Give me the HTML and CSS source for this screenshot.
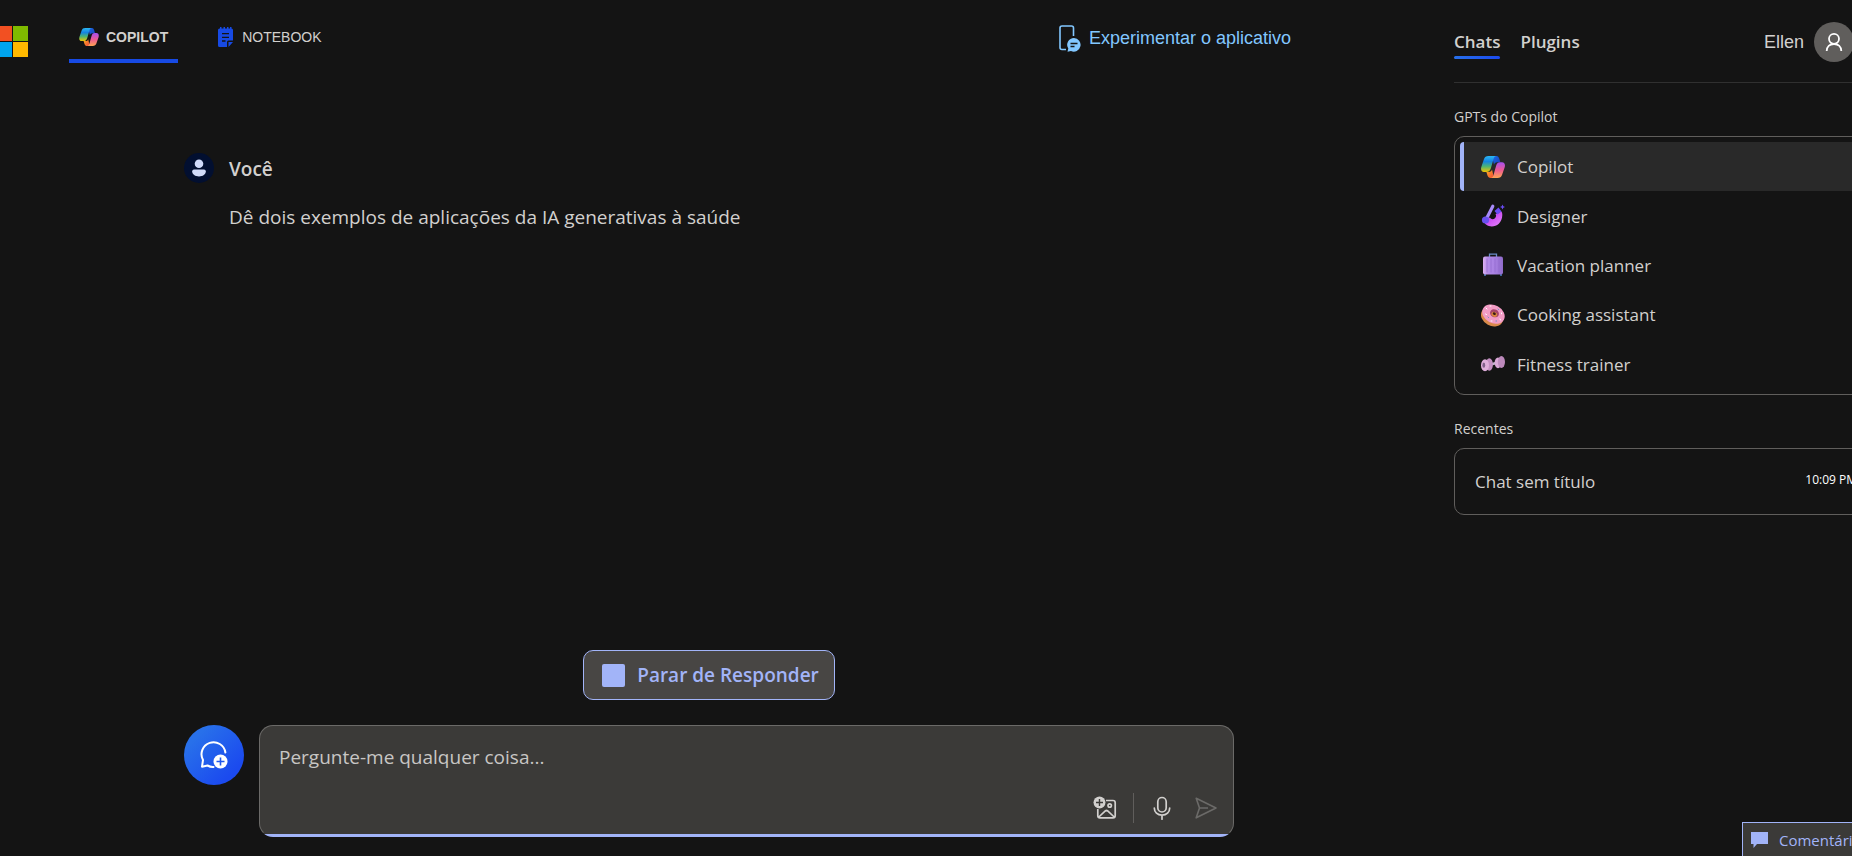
FILE: index.html
```html
<!DOCTYPE html>
<html lang="pt-BR">
<head>
<meta charset="utf-8">
<title>Copilot</title>
<link rel="stylesheet" href="styles.css">
</head>
<body>
<svg class="defs" aria-hidden="true">
  <defs>
    <linearGradient id="cpA" x1="0" y1="0" x2="0" y2="1"><stop offset="0" stop-color="#2bb8f5"/><stop offset=".35" stop-color="#1583e0"/><stop offset=".65" stop-color="#4cb473"/><stop offset="1" stop-color="#f2c400"/></linearGradient>
    <linearGradient id="cpB" x1="0" y1="0" x2="0" y2="1"><stop offset="0" stop-color="#a64ff0"/><stop offset=".5" stop-color="#ee5a93"/><stop offset="1" stop-color="#ffa552"/></linearGradient>
    <linearGradient id="cpC" x1="0" y1="0" x2="1" y2="1"><stop offset="0" stop-color="#1c6be8"/><stop offset="1" stop-color="#1740b8"/></linearGradient>
    <linearGradient id="cpD" x1="0" y1="0" x2="1" y2="1"><stop offset="0" stop-color="#ffb01f"/><stop offset="1" stop-color="#f0453a"/></linearGradient>
    <symbol id="copilot" viewBox="0 0 24 22">
      <path fill="url(#cpC)" d="M11 0h4.500c1.500 0 2.200 1 2.700 2.500l1.200 3.800h-3.400c-1.600 0-2.600 1-3 2.400z"/>
      <path fill="url(#cpD)" d="M13 22H9.500c-1.500 0-2.500-1-3-2.500L5.400 16H8c1.600 0 2.600-1 3-2.400z"/>
      <path fill="url(#cpA)" d="M7.500 0H15c-1.500.3-2 1.500-2.500 3L9.800 12.500C9 15 7.500 16 5.500 16H3C.3 16-.4 13.600.3 11L3 3C3.700 1 5 0 7.500 0z"/>
      <path fill="url(#cpB)" d="M16.500 22H10c1.500-.3 2-1.500 2.500-3l2.700-9.500C16 7 17 6.200 19 6.200h2c2.700 0 3.400 2.400 2.700 5L21 19c-.7 2-2 3-4.500 3z"/>
    </symbol>
  </defs>
</svg>
<div class="app">
  <div class="main">
    <header class="topbar">
      <svg class="ms" viewBox="0 0 28 31" role="img" aria-label="Microsoft"><path fill="#f25022" d="M0 0h12v15H0z"/><path fill="#7fba00" d="M13 0h15v15H13z"/><path fill="#00a4ef" d="M0 16h12v15H0z"/><path fill="#ffb900" d="M13 16h15v15H13z"/></svg>
      <nav class="tabs">
        <a class="tab tab-on" href="#copilot"><svg class="tab-cp"><use href="#copilot"/></svg>COPILOT</a>
        <a class="tab" href="#notebook"><svg class="tab-nb" viewBox="0 0 15 20"><path fill="#174ae4" d="M1.500 1.500H2V0h1.500v1.500h2V0H7v1.500h2V0h1.500v1.500h1.500V0h1.500v1.500Q15 1.500 15 3v10.500h-4.500Q9 13.500 9 15v5H1.500Q0 20 0 18.500V3q0-1.500 1.500-1.500zM10.500 15H15l-4.500 5z"/><path stroke="#141414" stroke-width="1.300" d="M4 6.700h7M4 10.300h7M4 14h3.500"/></svg>NOTEBOOK</a>
      </nav>
      <a class="try" href="#app"><svg class="phone" viewBox="0 0 22 27"><path fill="none" stroke="#82c7ff" stroke-width="1.600" d="M14.500 11V3q0-2-2-2H3Q1 1 1 3v19.500q0 2 2 2h4"/><path fill="#82c7ff" d="M15 13a6.800 6.800 0 1 1-3 13l-3.500.8.800-3.300A6.800 6.800 0 0 1 15 13z"/><path stroke="#141414" stroke-width="1.300" d="M11.500 18.500h7M11.500 21.500h4"/></svg>Experimentar o aplicativo</a>
    </header>
    <main class="chat">
      <section class="message">
        <svg class="you" viewBox="0 0 30 30"><circle cx="15" cy="15" r="15" fill="#020f30"/><circle cx="15" cy="10.800" r="4.300" fill="#d1dbfa"/><path fill="#d1dbfa" d="M10 16.500h10q1.800 0 1.800 1.800c0 3.200-3 5.200-6.800 5.200s-6.800-2-6.800-5.200q0-1.800 1.800-1.800z"/></svg>
        <div>
          <h2 class="author">Você</h2>
          <p class="text">Dê dois exemplos de aplicações da IA generativas à saúde</p>
        </div>
      </section>
      <button class="stop" type="button"><span class="square"></span>Parar de Responder</button>
      <form class="composer">
        <button class="new" type="button" aria-label="Novo tópico"><svg viewBox="0 0 28 28"><path fill="none" stroke="#fff" stroke-width="2" stroke-linejoin="round" stroke-linecap="round" d="M25.400 11.500A12 12 0 1 0 3 19l-1 6.700 5.500-1.200q3 1.600 6 1.400"/><circle cx="20.500" cy="20.500" r="7" fill="#fff"/><path stroke="#2058ec" stroke-width="1.600" d="M20.500 16.500v8M16.500 20.500h8"/></svg></button>
        <div class="box">
          <textarea class="ask" rows="1" aria-label="Pergunte-me qualquer coisa" placeholder="Pergunte-me qualquer coisa..."></textarea>
          <div class="tools">
            <button class="tool" type="button" aria-label="Adicionar imagem"><svg viewBox="0 0 24 24"><g fill="none" stroke="#d2d0ce" stroke-width="1.700"><path d="M13 4.500h7q2.200 0 2.200 2.200v13q0 2.200-2.200 2.200H7q-2.200 0-2.200-2.200V13M5.800 21l6.500-6q1.200-1 2.400 0l6.500 6"/><circle cx="16.700" cy="9.500" r="1.700"/></g><circle cx="6.500" cy="6.500" r="6" fill="#d2d0ce"/><path stroke="#3b3a38" stroke-width="1.400" d="M6.500 3v7M3 6.500h7"/></svg></button>
            <span class="sep"></span>
            <button class="tool tool-mic" type="button" aria-label="Usar microfone"><svg viewBox="0 0 24 24"><g fill="none" stroke="#d2d0ce" stroke-width="1.700" stroke-linecap="round"><rect x="7.800" y="1.500" width="8.400" height="14.500" rx="4.200"/><path d="M4.300 12c0 4.200 3.200 7.200 7.700 7.200s7.700-3 7.700-7.200M12 19.500v3.700"/></g></svg></button>
            <button class="tool" type="submit" aria-label="Enviar"><svg viewBox="0 0 24 24"><path fill="none" stroke="#6b6a68" stroke-width="1.600" stroke-linejoin="round" d="M2.200 2.200L22 12 2.200 21.800 5.500 12zM5.500 12H14"/></svg></button>
          </div>
        </div>
      </form>
    </main>
  </div>
  <aside class="side">
    <div class="side-top">
      <nav class="side-tabs"><a class="side-tab side-on" href="#chats">Chats</a><a class="side-tab" href="#plugins">Plugins</a></nav>
      <button class="user" type="button">Ellen<svg viewBox="0 0 40 40"><circle cx="20" cy="20" r="20" fill="#605e5c"/><g fill="none" stroke="#fff" stroke-width="1.800"><circle cx="20" cy="16.800" r="5"/><path d="M12.700 29c0-4.400 3-7 7.300-7s7.300 2.600 7.300 7"/></g></svg></button>
    </div>
    <h3 class="label">GPTs do Copilot</h3>
    <ul class="card gpts">
      <li><a class="gpt gpt-on" href="#g1"><svg viewBox="0 0 24 24"><use href="#copilot" y="1" width="24" height="22"/></svg>Copilot</a></li>
      <li><a class="gpt" href="#g2"><svg viewBox="0 0 24 24"><defs><linearGradient id="dsA" x1="0" y1="0" x2="1" y2="1"><stop offset="0" stop-color="#8a4bf2"/><stop offset=".5" stop-color="#cf52f5"/><stop offset="1" stop-color="#e68bf9"/></linearGradient></defs><path fill="url(#dsA)" d="M2.500 16c1.500 9.500 18.500 9 18.800-5 0-1.500-.3-2.500-.8-3.500l-6 2.500c2.500 3.500-3.500 7.500-5.500 3.500z"/><path stroke="#a98cfa" stroke-width="3.200" stroke-linecap="round" d="M11.800 2.200L5.800 14"/><circle cx="4.500" cy="16" r="3.600" fill="#6a50ef"/><path fill="#6a4cf5" d="M17.500 3.500l3 4-4 3-3-3.500zM21.500.5l.8 1.700 1.700.8-1.700.8-.8 1.700-.8-1.700-1.700-.8 1.700-.8z"/></svg>Designer</a></li>
      <li><a class="gpt" href="#g3"><svg viewBox="0 0 24 24"><defs><linearGradient id="vcA"><stop offset="0" stop-color="#dcb0f2"/><stop offset=".25" stop-color="#b28be8"/><stop offset=".6" stop-color="#a880e2"/><stop offset="1" stop-color="#8f6bc9"/></linearGradient></defs><path fill="none" stroke="#6b8cc8" stroke-width="1.300" d="M8.500 4V1.200h7V4"/><path stroke="#3c6499" stroke-width="2" d="M4 20v3M20 20v3"/><rect x="2" y="3.500" width="20" height="18" rx="2" fill="url(#vcA)"/><path stroke="#8f68cc" stroke-width=".7" d="M6 5.500v14M10 5.500v14M14 5.500v14M18 5.500v14"/></svg>Vacation planner</a></li>
      <li><a class="gpt" href="#g4"><svg viewBox="0 0 24 24"><g transform="rotate(28 12 12)"><ellipse cx="12" cy="14" rx="11.600" ry="9" fill="#d98a4b"/><ellipse cx="12" cy="11" rx="11.800" ry="9" fill="#f29cc5"/><ellipse cx="12.500" cy="9.800" rx="4.600" ry="3.900" fill="#a8446a"/><ellipse cx="12.800" cy="10.800" rx="3" ry="2.400" fill="#d9843c"/><ellipse cx="12.500" cy="10.200" rx="1.600" ry="1.200" fill="#3a1a14"/></g><path stroke="#fff" stroke-width="1" stroke-linecap="round" d="M5 5l1 1M9 3h1M4.500 11l1 .5M10 18h1M19 16l.5 1M20.500 10v.8"/><path stroke="#5b8fc7" stroke-linecap="round" d="M7 14l.5.500M15 18h.5M17 6l.5.500"/></svg>Cooking assistant</a></li>
      <li><a class="gpt" href="#g5"><svg viewBox="0 0 24 24"><path stroke="#c3b6cb" stroke-width="2.500" d="M8 13l9-2.500"/><ellipse cx="8.300" cy="12.500" rx="3.600" ry="6.200" fill="#c48fc2"/><ellipse cx="4" cy="13.200" rx="4" ry="6" fill="#dfaedb"/><ellipse cx="2.800" cy="13.200" rx="1.400" ry="2.600" fill="#80608a"/><ellipse cx="17" cy="10.800" rx="3.400" ry="5.400" fill="#dba9d8"/><ellipse cx="20.400" cy="10" rx="3.600" ry="6" fill="#bd8abc"/></svg>Fitness trainer</a></li>
    </ul>
    <h3 class="label label-recent">Recentes</h3>
    <a class="card recent" href="#chat">Chat sem título<time class="time">10:09 PM</time></a>
  </aside>
</div>
<button class="feedback" type="button"><svg viewBox="0 0 17 16"><path fill="#a2b4f8" d="M0 0h17v12H6l-3.500 4v-4H0z"/></svg>Comentários</button>
</body>
</html>
```
FILE: styles.css
```css
* { box-sizing: border-box; }

body {
  margin: 0;
  overflow: hidden;
  background: #141414;
  color: #d2d0ce;
  font-family: "Open Sans", "Segoe UI", sans-serif;
}

h2, h3, p, ul { margin: 0; padding: 0; list-style: none; }
a { color: inherit; text-decoration: none; }
button { border: 0; padding: 0; background: none; color: inherit; font: inherit; cursor: pointer; }
svg { display: block; flex: none; }
.defs { position: absolute; width: 0; height: 0; }

.app { display: flex; min-height: 100vh; }
.main { flex: 1; display: flex; flex-direction: column; }

.topbar {
  display: flex;
  align-items: flex-start;
  font-family: "Liberation Sans", Arial, sans-serif;
}
.ms { width: 28px; height: 31px; margin-top: 26px; }
.tabs { display: flex; gap: 30px; margin-left: 41px; }
.tab {
  display: flex;
  align-items: center;
  height: 63px;
  padding: 15px 10px 1px;
  border-bottom: 4px solid transparent;
  font-size: 14px;
}
.tab-on { border-color: #174ae4; font-weight: 700; }
.tab-cp { width: 20px; height: 18px; margin-right: 7px; }
.tab-nb { width: 15px; height: 20px; margin-right: 9px; }
.try {
  display: flex;
  align-items: center;
  gap: 8px;
  margin: 25px 143px 0 auto;
  color: #82c7ff;
  font-size: 18px;
}
.phone { width: 22px; height: 27px; }

.chat {
  flex: 1;
  display: flex;
  flex-direction: column;
  padding: 90px 200px 19px 184px;
}
.message { display: flex; gap: 15px; margin-bottom: auto; }
.you { width: 30px; height: 30px; }
.author { font-size: 19px; line-height: 32px; font-weight: 600; }
.text { margin-top: 16px; font-size: 19px; line-height: 32px; }

.stop {
  display: flex;
  align-items: center;
  align-self: center;
  gap: 12px;
  height: 50px;
  margin-bottom: 25px;
  padding: 0 15px 0 18px;
  border: 1px solid #a2b4f8;
  border-radius: 10px;
  background: #484644;
  color: #a2b4f8;
  font-size: 19px;
  font-weight: 600;
}
.square { width: 23px; height: 23px; border-radius: 2px; background: #a2b4f8; }

.composer { display: flex; gap: 15px; }
.new {
  display: grid;
  place-items: center;
  width: 60px;
  height: 60px;
  border-radius: 50%;
  background: linear-gradient(135deg, #2870ea 20%, #1b4aef 80%);
}
.new svg { width: 28px; height: 28px; }
.box {
  flex: 1;
  display: flex;
  flex-direction: column;
  justify-content: space-between;
  min-height: 112px;
  padding: 15px 10px 11px 19px;
  border: 1px solid #6b6a68;
  border-bottom-color: transparent;
  border-radius: 14px;
  background: linear-gradient(#a2b4f8, #a2b4f8) bottom / 100% 3px no-repeat border-box, #3b3a38;
}
.ask {
  width: 100%;
  height: 32px;
  border: 0;
  padding: 0;
  outline: 0;
  resize: none;
  background: none;
  color: #d2d0ce;
  font: 19px/32px "Open Sans", "Segoe UI", sans-serif;
}
.ask::placeholder { color: #c8c6c4; opacity: 1; }
.tools { display: flex; align-items: center; justify-content: flex-end; }
.tool { display: grid; place-items: center; width: 34px; height: 34px; }
.tool svg { width: 24px; height: 24px; }
.sep { width: 1px; height: 30px; margin: 0 11px; background: #605e5c; }
.tool-mic { margin-right: 10px; }

.side { flex: none; width: 438px; margin-right: -20px; padding: 22px 0 0 20px; }
.side-top {
  display: flex;
  justify-content: space-between;
  height: 61px;
  padding-right: 18px;
  border-bottom: 1px solid #303030;
}
.side-tabs { display: flex; gap: 20px; align-items: flex-start; padding-top: 6px; }
.side-tab { font-size: 17px; line-height: 28px; font-weight: 600; }
.side-on::after {
  content: "";
  display: block;
  height: 3px;
  border-radius: 2px;
  background: linear-gradient(90deg, #2870ea, #1b4aef);
}
.user {
  display: flex;
  align-items: center;
  gap: 10px;
  height: 40px;
  font: 18px "Liberation Sans", Arial, sans-serif;
}
.user svg { width: 40px; height: 40px; }

.label { margin-top: 22px; font-size: 14px; line-height: 24px; font-weight: 400; }
.card { margin-top: 7px; border: 1px solid #605e5c; border-radius: 10px; }
.gpts {
  display: grid;
  grid-auto-rows: 1fr;
  min-height: 259px;
  padding: 5px;
}
.gpt {
  display: flex;
  align-items: center;
  gap: 12px;
  height: 100%;
  padding-left: 17px;
  border-left: 4px solid transparent;
  border-radius: 4px;
  font-size: 17px;
}
.gpt svg { width: 24px; height: 24px; }
.gpt-on { border-color: #a2b4f8; background: #292929; }
.recent {
  display: flex;
  align-items: center;
  justify-content: space-between;
  height: 67px;
  padding: 0 14px 0 20px;
  font-size: 17px;
}
.time { padding-bottom: 4px; color: #fff; font-size: 12px; font-weight: 500; }

.feedback {
  position: fixed;
  right: -20px;
  bottom: -6px;
  display: flex;
  align-items: center;
  gap: 11px;
  width: 130px;
  height: 40px;
  padding: 0 0 4px 8px;
  border: 1px solid #a2b4f8;
  background: #3b3a38;
  color: #a2b4f8;
  font-size: 15px;
}
.feedback svg { width: 17px; height: 16px; }
```
